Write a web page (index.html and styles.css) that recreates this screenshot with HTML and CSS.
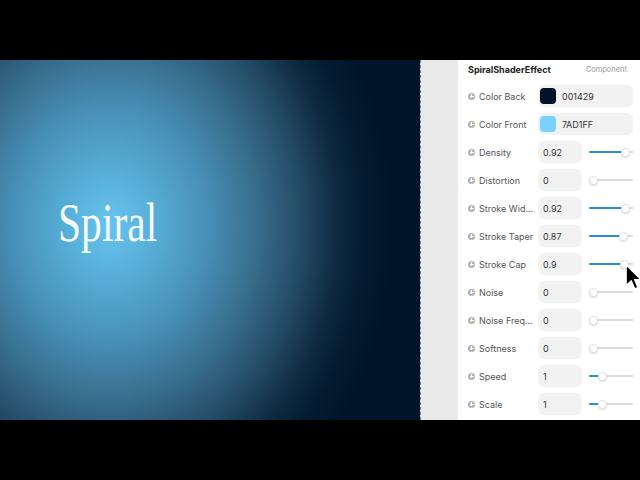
FILE: index.html
```html
<!DOCTYPE html>
<html lang="en">
<head>
  <meta charset="UTF-8" />
  <title>Spiral Shader</title>
  <link rel="stylesheet" href="styles.css">
</head>
<body>

  <div class="stage">
    <!-- shader preview -->
    <div class="canvas">
      <span class="title">Spiral</span>
    </div>

    <div class="gutter"></div>

    <!-- property inspector -->
    <div class="panel">
      <div class="panel-head">
        <span class="panel-name">SpiralShaderEffect</span>
        <span class="panel-kind">Component</span>
      </div>

      <div class="prop">
        <span class="plus"></span>
        <span class="prop-label">Color Back</span>
        <div class="field field-color"><span class="swatch swatch-back"></span>001429</div>
      </div>
      <div class="prop">
        <span class="plus"></span>
        <span class="prop-label">Color Front</span>
        <div class="field field-color"><span class="swatch swatch-front"></span>7AD1FF</div>
      </div>
      <div class="prop">
        <span class="plus"></span>
        <span class="prop-label">Density</span>
        <div class="field">0.92</div>
        <div class="slider" style="--v: 0.92"><span class="fill"></span><span class="thumb"></span></div>
      </div>
      <div class="prop">
        <span class="plus"></span>
        <span class="prop-label">Distortion</span>
        <div class="field">0</div>
        <div class="slider" style="--v: 0"><span class="fill"></span><span class="thumb"></span></div>
      </div>
      <div class="prop">
        <span class="plus"></span>
        <span class="prop-label" title="Stroke Width">Stroke Wid...</span>
        <div class="field">0.92</div>
        <div class="slider" style="--v: 0.92"><span class="fill"></span><span class="thumb"></span></div>
      </div>
      <div class="prop">
        <span class="plus"></span>
        <span class="prop-label">Stroke Taper</span>
        <div class="field">0.87</div>
        <div class="slider" style="--v: 0.87"><span class="fill"></span><span class="thumb"></span></div>
      </div>
      <div class="prop">
        <span class="plus"></span>
        <span class="prop-label">Stroke Cap</span>
        <div class="field">0.9</div>
        <div class="slider" style="--v: 0.9"><span class="fill"></span><span class="thumb"></span></div>
      </div>
      <div class="prop">
        <span class="plus"></span>
        <span class="prop-label">Noise</span>
        <div class="field">0</div>
        <div class="slider" style="--v: 0"><span class="fill"></span><span class="thumb"></span></div>
      </div>
      <div class="prop">
        <span class="plus"></span>
        <span class="prop-label" title="Noise Frequency">Noise Freq...</span>
        <div class="field">0</div>
        <div class="slider" style="--v: 0"><span class="fill"></span><span class="thumb"></span></div>
      </div>
      <div class="prop">
        <span class="plus"></span>
        <span class="prop-label">Softness</span>
        <div class="field">0</div>
        <div class="slider" style="--v: 0"><span class="fill"></span><span class="thumb"></span></div>
      </div>
      <div class="prop">
        <span class="plus"></span>
        <span class="prop-label">Speed</span>
        <div class="field">1</div>
        <div class="slider" style="--v: 0.25"><span class="fill"></span><span class="thumb"></span></div>
      </div>
      <div class="prop">
        <span class="plus"></span>
        <span class="prop-label">Scale</span>
        <div class="field">1</div>
        <div class="slider" style="--v: 0.25"><span class="fill"></span><span class="thumb"></span></div>
      </div>
    </div>

    <!-- mouse pointer -->
    <svg class="pointer" width="17" height="27" viewBox="0 0 15 24">
      <path d="M1 1 L1 19 L5.5 14.8 L8.6 22 L11.4 20.8 L8.4 13.8 L14 13.8 Z"
            fill="#000" stroke="#fff" stroke-width="1.1" stroke-linejoin="round"/>
    </svg>
  </div>

</body>
</html>
```

FILE: styles.css
```css
* {
  box-sizing: border-box;
}

body {
  margin: 0;
  background: #000;
  font-family: Inter, "Noto Sans", sans-serif;
  height: 480px;
  overflow: hidden;
}

.stage {
  position: relative;
  display: flex;
  height: 360px;
  margin-top: 60px;
}

.canvas {
  width: 420px;
  padding: 136px 0 0 58px;
  background: radial-gradient(ellipse 285px 340px at 110px 165px,
    #68c4ee 0%,
    #59b2dc 13%,
    #4890b8 34%,
    #376d8c 52%,
    #244b66 67%,
    #0e2a40 80%,
    #031a2f 90%,
    #001429 100%);
}

.title {
  display: inline-block;
  font-family: "Liberation Serif", serif;
  font-size: 54px;
  line-height: 1;
  color: #f4fbff;
  transform: scaleX(0.77);
  transform-origin: left center;
}

.gutter {
  width: 38px;
  background: #e9e9e9;
  border-left: 1px dashed #5a86bb;
}

.panel {
  flex: 1;
  background: #fff;
  padding: 0 7px 0 10px;
  overflow: hidden;
}

.panel-head {
  height: 22px;
  display: flex;
  justify-content: space-between;
  align-items: center;
  padding-bottom: 3px;
}

.panel-name {
  font-size: 9px;
  font-weight: 700;
  color: #222;
}

.panel-kind {
  font-size: 7.5px;
  color: #9a9a9a;
  margin-right: 6px;
}

.prop {
  display: flex;
  align-items: center;
  height: 28px;
}

.plus {
  position: relative;
  flex: none;
  width: 7px;
  height: 7px;
  border-radius: 50%;
  background: #b3b3b3;
  margin-right: 4px;
}

.plus::before,
.plus::after {
  content: "";
  position: absolute;
  background: #fff;
  left: 1.5px;
  top: 3px;
  width: 4px;
  height: 1px;
}

.plus::after {
  left: 3px;
  top: 1.5px;
  width: 1px;
  height: 4px;
}

.prop-label {
  width: 55px;
  margin-right: 4px;
  font-size: 9px;
  color: #555;
  white-space: nowrap;
}

.field {
  flex: none;
  width: 44px;
  height: 22px;
  display: flex;
  align-items: center;
  padding-left: 5px;
  border-radius: 6px;
  background: #f2f2f2;
  font-size: 9px;
  color: #333;
}

.field-color {
  flex: 1;
  padding-left: 2px;
}

.swatch {
  width: 16px;
  height: 16px;
  border-radius: 4px;
  margin-right: 6px;
}

.swatch-back {
  background: #001429;
}

.swatch-front {
  background: #7ad1ff;
}

/* value sliders, --v is the position from 0 to 1 */
.slider {
  position: relative;
  flex: 1;
  height: 10px;
  margin-left: 7px;
}

.slider::before {
  content: "";
  position: absolute;
  left: 0;
  right: 0;
  top: 4px;
  height: 1.5px;
  background: #dcdcdc;
}

.fill {
  position: absolute;
  left: 0;
  top: 3.5px;
  height: 2.5px;
  border-radius: 2px;
  width: calc(4.5px + var(--v) * (100% - 9px));
  background: #2a8fd2;
}

.thumb {
  position: absolute;
  top: 0.5px;
  left: calc(var(--v) * (100% - 9px));
  width: 9px;
  height: 9px;
  border-radius: 50%;
  background: #fff;
  border: 1px solid #e2e2e2;
  box-shadow: 0 1px 2px rgba(0, 0, 0, 0.15);
}

.pointer {
  position: absolute;
  left: 625px;
  top: 204px;
}
```
